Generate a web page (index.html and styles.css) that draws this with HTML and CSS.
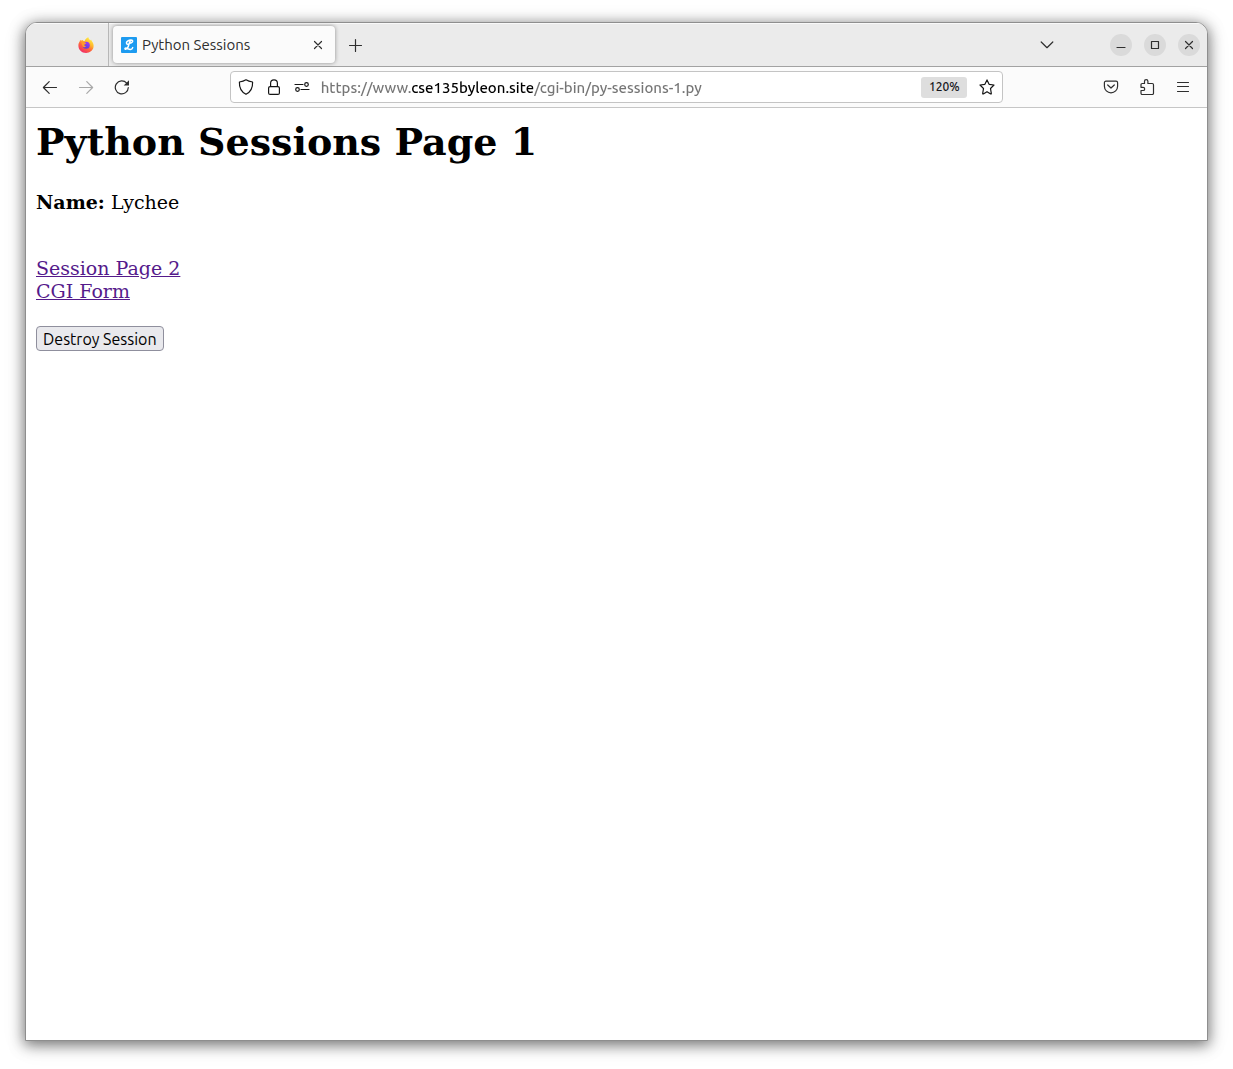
FILE: index.html
```html
<!DOCTYPE html>
<html lang="en">
<head>
<meta charset="utf-8">
<meta name="viewport" content="width=device-width, initial-scale=1">
<title>Python Sessions</title>
<link rel="stylesheet" href="styles.css">
</head>
<body>
<div class="window">
  <header class="tabbar">
    <button class="pinned" aria-label="Firefox View">
      <svg width="16" height="16" viewBox="0 0 16 16">
        <defs>
          <linearGradient id="flame" x1="0.85" y1="0.1" x2="0.3" y2="1">
            <stop offset="0" stop-color="#fff044"/>
            <stop offset="0.35" stop-color="#ffb52c"/>
            <stop offset="0.6" stop-color="#ff6a3a"/>
            <stop offset="1" stop-color="#f02a68"/>
          </linearGradient>
          <linearGradient id="globe" x1="0.8" y1="0" x2="0.3" y2="1">
            <stop offset="0" stop-color="#a238ff"/>
            <stop offset="1" stop-color="#5440d8"/>
          </linearGradient>
        </defs>
        <path fill="url(#flame)" d="M10.4.3c.1 1.5 1.1 2.3 2 3.1l.6-.8c.6 1 .8 1.8 1.6 2.7 1 1.600 1.200 3.300.9 4.900-.7 3.400-3.800 5.700-7.400 5.700C3.700 15.900.3 12.700.4 8.400c0-1.600.5-3 1.400-4.200l.3-1.400.9 1c.5-.5 1-.8 1.500-.9C5 3.700 5.600 4 6.600 4.100 7.200 2.200 8.600 1 10.400.3z"/>
        <circle cx="8.300" cy="8.300" r="3.500" fill="url(#globe)"/>
        <path fill="#ff9a2c" d="M3.300 5.200c1.300-.6 3-.4 4.100.5l.9.4c-.1.900-1.500 1-1.900 1.700-.3.900.6 1.700 1.900 1.500-1.100 1.500-3 1.200-3.700-.1-.6-1.300-1.100-2.500-1.300-4z"/>
      </svg>
    </button>
    <div class="tab">
      <svg width="16" height="16" viewBox="0 0 16 16">
        <rect width="16" height="16" rx="1" fill="#1d9bf0"/>
        <path fill="none" stroke="#fff" stroke-width="1.500" stroke-linecap="round" stroke-linejoin="round" d="M7.200 7.600C4.800 7.200 5 5 6.800 4 8.600 2.900 11.600 2.400 11.700 4.100c0 1.300-1.900 2.200-3.100 2.100M9.600 3.600C8.200 5.200 8 7.600 7.200 9.600 6.500 11.400 5.600 12.500 4.500 12.300c-.9-.2-.6-1.200.5-1.200 1.600.1 2.600 1.400 4.400 1.300 1.200-.1 2-.8 2.300-1.800"/>
      </svg>
      <span class="tab-title">Python Sessions</span>
      <button class="icon tab-close" aria-label="Close tab">
        <svg width="16" height="16" viewBox="0 0 16 16"><path d="M4.500 4.500l7 7M11.500 4.500l-7 7"/></svg>
      </button>
    </div>
    <button class="icon new-tab" aria-label="New tab">
      <svg width="16" height="16" viewBox="0 0 16 16"><path d="M8.500 2.500v12M2.500 8.500h12"/></svg>
    </button>
    <button class="icon list-tabs" aria-label="List all tabs">
      <svg width="16" height="16" viewBox="0 0 16 16"><path d="M2.200 5L8 10.700 13.800 5"/></svg>
    </button>
    <div class="controls">
      <button class="control" aria-label="Minimize"><svg width="16" height="16" viewBox="0 0 16 16"><path d="M4 10.500h8"/></svg></button>
      <button class="control" aria-label="Maximize"><svg width="16" height="16" viewBox="0 0 16 16"><path d="M4.500 4.500h7v7h-7z"/></svg></button>
      <button class="control" aria-label="Close"><svg width="16" height="16" viewBox="0 0 16 16"><path d="M4.500 4.500l7 7M11.500 4.500l-7 7"/></svg></button>
    </div>
  </header>

  <nav class="toolbar" aria-label="Navigation">
    <button class="icon tool" aria-label="Back"><svg width="16" height="16" viewBox="0 0 16 16"><path d="M1.500 8.500h13M7.200 2.700L1.400 8.500l5.800 5.800"/></svg></button>
    <button class="icon tool" aria-label="Forward" disabled><svg width="16" height="16" viewBox="0 0 16 16"><path d="M1.500 8.500h13M8.800 2.700l5.800 5.800-5.800 5.800"/></svg></button>
    <button class="icon tool" aria-label="Reload"><svg width="16" height="16" viewBox="0 0 16 16"><path d="M14.300 8.500A6.500 6.500 0 1 1 12.700 4.100"/><path class="solid" d="M15 1.200v5.300H9.700z"/></svg></button>
    <span class="spring"></span>
    <div class="urlbar">
      <button class="icon url-icon" aria-label="Tracking protection"><svg width="16" height="16" viewBox="0 0 16 16"><path d="M8 .8c2 1.300 4.300 1.900 6.600 2.200.2 4.700-1.200 9.600-6.600 12.300C2.600 12.600 1.200 7.700 1.400 3 3.700 2.700 6 2.100 8 .8z"/></svg></button>
      <button class="icon url-icon" aria-label="Site information"><svg width="16" height="16" viewBox="0 0 16 16"><rect x="2.600" y="7.600" width="10.800" height="7.800" rx="1.500"/><path d="M4.600 7.500V4.200a3.400 3.400 0 0 1 6.800 0v3.300"/></svg></button>
      <button class="icon url-icon" aria-label="Permissions"><svg width="16" height="16" viewBox="0 0 16 16"><path d="M1 5.500h8M7 10.500h8"/><circle cx="12.500" cy="5.500" r="1.800"/><circle cx="3.500" cy="10.500" r="1.800"/></svg></button>
      <input class="address" type="text" aria-label="Address" value="https://www.cse135byleon.site/cgi-bin/py-sessions-1.py">
      <button class="zoom-level" aria-label="Zoom level 120%">120%</button>
      <button class="icon url-icon" aria-label="Bookmark this page"><svg width="16" height="16" viewBox="0 0 16 16"><path d="M8 .9l2.100 4.400 4.900.7-3.500 3.500.8 4.900q.1.800-.6.500L8 12.700l-3.700 2.200q-.7.300-.6-.5l.8-4.900L1 6l4.900-.7z"/></svg></button>
    </div>
    <span class="spring"></span>
    <button class="icon tool" aria-label="Save to Pocket"><svg width="16" height="16" viewBox="0 0 16 16"><path d="M3 2.200h10q1.600 0 1.600 1.600v3.400a6.600 6.600 0 0 1-13.200 0V3.800Q1.400 2.200 3 2.200zM4.700 6L8 9l3.300-3"/></svg></button>
    <button class="icon tool" aria-label="Extensions"><svg width="16" height="16" viewBox="0 0 16 16"><path d="M5.500 4.500V2.300a1.700 1.700 0 0 1 3.400 0v2.200h4.400q1.200 0 1.200 1.200v8.600q0 1.200-1.200 1.200H3.200Q2 15.500 2 14.300v-2.800h2.100a1.600 1.600 0 0 0 0-3.200H2V5.700q0-1.200 1.200-1.200z"/></svg></button>
    <button class="icon tool" aria-label="Open application menu"><svg width="16" height="16" viewBox="0 0 16 16"><path d="M2.500 3.500h11M2.500 7.500h11M2.500 12.500h11"/></svg></button>
  </nav>

  <main class="page">
    <h1>Python Sessions Page 1</h1>
    <p class="name"><b>Name:</b> Lychee</p>
    <div class="links">
      <a href="#session-page-2">Session Page 2</a>
      <a href="#cgi-form">CGI Form</a>
    </div>
    <form>
      <button class="destroy" type="button">Destroy Session</button>
    </form>
  </main>
</div>
</body>
</html>
```
FILE: styles.css
```css
* {
  box-sizing: border-box;
}

body {
  display: flex;
  min-height: 100vh;
  margin: 0;
  padding: 22px 25px 28px;
  background: #fff;
}

button,
input {
  margin: 0;
  padding: 0;
  border: 0;
  background: none;
  color: inherit;
  font: inherit;
}

.window {
  display: flex;
  flex: 1;
  flex-direction: column;
  overflow: hidden;
  border: 1px solid #8e8e8e;
  border-radius: 12px 12px 0 0;
  background: #fff;
  box-shadow: 0 3px 14px 1px rgba(0, 0, 0, 0.5), 0 4px 24px rgba(0, 0, 0, 0.1);
  color: #2e2e2e;
  font: 15px/20px Ubuntu, "Noto Sans", sans-serif;
}

.tabbar {
  display: flex;
  align-items: center;
  height: 44px;
  padding-right: 7px;
  border-bottom: 1px solid #a2a2a2;
  background: #ebebeb;
  box-shadow: inset 0 1px #f9f9f9;
}

.pinned {
  display: flex;
  align-items: center;
  justify-content: flex-end;
  align-self: stretch;
  width: 83px;
  padding-right: 14px;
  border-right: 1px solid #b8b8b8;
}

.tab {
  display: flex;
  align-items: center;
  width: 222px;
  height: 37px;
  margin-left: 4px;
  padding: 0 9px 0 8px;
  border-radius: 4px;
  background: #fbfbfb;
  box-shadow: 0 0 4px rgba(0, 0, 0, 0.4);
}

.tab-title {
  flex: 1;
  margin-left: 5px;
}

.icon {
  display: flex;
  align-items: center;
  justify-content: center;
}

.icon svg,
.control svg {
  fill: none;
  stroke: #2e2e2e;
  stroke-width: 1.2;
  stroke-linecap: round;
  stroke-linejoin: round;
}

.icon .solid {
  fill: #2e2e2e;
  stroke: none;
}

.new-tab {
  width: 40px;
  height: 36px;
}

.list-tabs {
  width: 36px;
  height: 36px;
  margin-left: auto;
}

.controls {
  display: flex;
  gap: 12px;
  margin-left: 45px;
}

.control {
  display: flex;
  align-items: center;
  justify-content: center;
  width: 22px;
  height: 22px;
  border-radius: 50%;
  background: #dadada;
}

.toolbar {
  display: flex;
  align-items: center;
  height: 41px;
  padding: 0 6px;
  border-bottom: 1px solid #c6c6c6;
  background: #fbfbfb;
}

.tool {
  width: 36px;
  height: 32px;
}

.tool:disabled svg {
  opacity: 0.4;
}

.spring {
  flex: 90;
}

.urlbar {
  display: flex;
  flex: 773;
  align-items: center;
  height: 32px;
  padding: 0 1px;
  border: 1px solid #c4c4c4;
  border-radius: 4px;
  background: #fff;
}

.url-icon {
  width: 28px;
  height: 28px;
}

.urlbar .icon svg {
  stroke: #151515;
}

/* The registered domain is emphasised within the address. */
.address {
  flex: 1;
  min-width: 0;
  height: 30px;
  margin-left: 5px;
  background: linear-gradient(90deg, #757575 91px, #000 91px 212px, #757575 212px);
  background-clip: text;
  -webkit-background-clip: text;
  color: transparent;
  font-weight: 500;
}

.zoom-level {
  width: 46px;
  height: 21px;
  margin: 0 6px;
  border-radius: 3px;
  background: #dedede;
  color: #15141a;
  font-size: 12px;
  font-weight: 500;
}

.page {
  flex: 1;
  padding: 10px;
  color: #000;
  font: 19px/23px "DejaVu Serif", serif;
}

.page h1 {
  margin: 0 0 25px;
  font-size: 38px;
  line-height: 48px;
}

.name {
  margin: 0 0 43px;
}

.links {
  display: flex;
  flex-direction: column;
  align-items: flex-start;
  margin-bottom: 23px;
}

.links a {
  color: #551a8b;
}

.destroy {
  height: 25px;
  padding: 0 6px;
  border: 1px solid #8f8f9d;
  border-radius: 4px;
  background: #e9e9ed;
  font: 16px/22px Ubuntu, "Noto Sans", sans-serif;
}
```
